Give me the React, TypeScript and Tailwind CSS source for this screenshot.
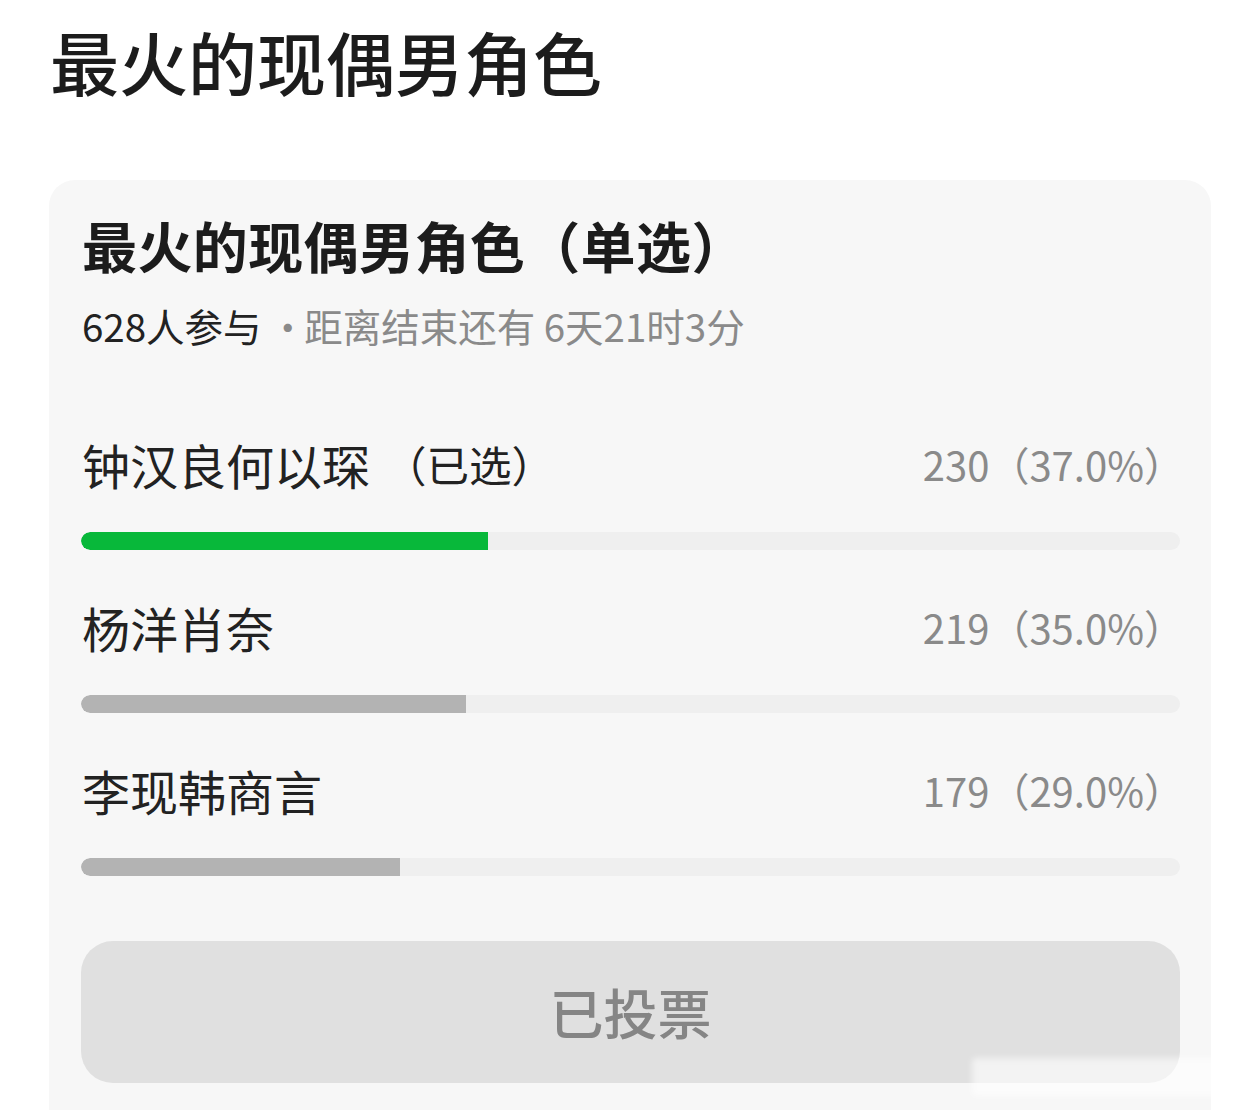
import React from "react";

const font = { fontFamily: '"Noto Sans CJK SC", "Noto Sans", sans-serif' };

type Opt = { name: string; selected?: boolean; count: number; pct: number };

const options: Opt[] = [
  { name: "钟汉良何以琛", selected: true, count: 230, pct: 37.0 },
  { name: "杨洋肖奈", count: 219, pct: 35.0 },
  { name: "李现韩商言", count: 179, pct: 29.0 },
];

export default function App() {
  return (
    <div
      className="relative h-[1110px] w-[1260px] overflow-hidden bg-white font-['Noto_Sans_CJK_SC',sans-serif]"
      style={font}
    >
      <h1 className="pl-[50px] pt-[27px] text-[69px] font-medium leading-[69px] text-[#1c1c1c]">
        最火的现偶男角色
      </h1>

      <div className="ml-[49px] mt-[84px] w-[1162px] rounded-[26px] bg-[#f7f7f7] pl-[32px] pr-[31px] pt-[37px] pb-[80px]">
        <div className="pl-[1px] text-[55px] font-bold leading-[55px] tracking-[0.4px] text-[#1c1c1c]">
          最火的现偶男角色（单选）
        </div>
        <div className="mt-[34px] flex items-center pl-[1px] text-[38.5px] leading-[39px] text-[#8a8a8a]">
          <span className="text-[#222]">628人参与</span>
          <span className="ml-[7px] mr-[-3px]">·</span>
          <span>距离结束还有 6天21时3分</span>
        </div>

        <div className="mt-[95px] flex flex-col gap-[53px]">
          {options.map((o) => (
            <div key={o.name} className="flex flex-col gap-[44px]">
              <div className="flex items-center justify-between pl-[1px]">
                <span className="flex items-center text-[48px] leading-[48px] text-[#222]">
                  {o.name}
                  {o.selected ? (
                    <span className="ml-[14px] text-[42.5px] leading-[48px]">（已选）</span>
                  ) : null}
                </span>
                <span className="mr-[-4px] text-[40px] leading-[48px] text-[#8a8a8a]">
                  {o.count}（{o.pct.toFixed(1)}%）
                </span>
              </div>
              <div className="h-[18px] w-full overflow-hidden rounded-full bg-[#efefef]">
                <div
                  className={
                    o.selected
                      ? "h-full rounded-l-full bg-[#08b83a]"
                      : "h-full rounded-l-full bg-[#b3b3b3]"
                  }
                  style={{ width: `${o.pct}%` }}
                />
              </div>
            </div>
          ))}
        </div>

        <div className="mt-[65px] flex h-[142px] items-center justify-center rounded-[32px] bg-[#e0e0e0]">
          <span className="text-[54px] font-medium leading-[54px] text-[#858585]">已投票</span>
        </div>
      </div>

      <div className="absolute left-[972px] top-[1058px] h-[38px] w-[275px] rounded-[4px] bg-white/60 blur-[3px]" />
    </div>
  );
}
